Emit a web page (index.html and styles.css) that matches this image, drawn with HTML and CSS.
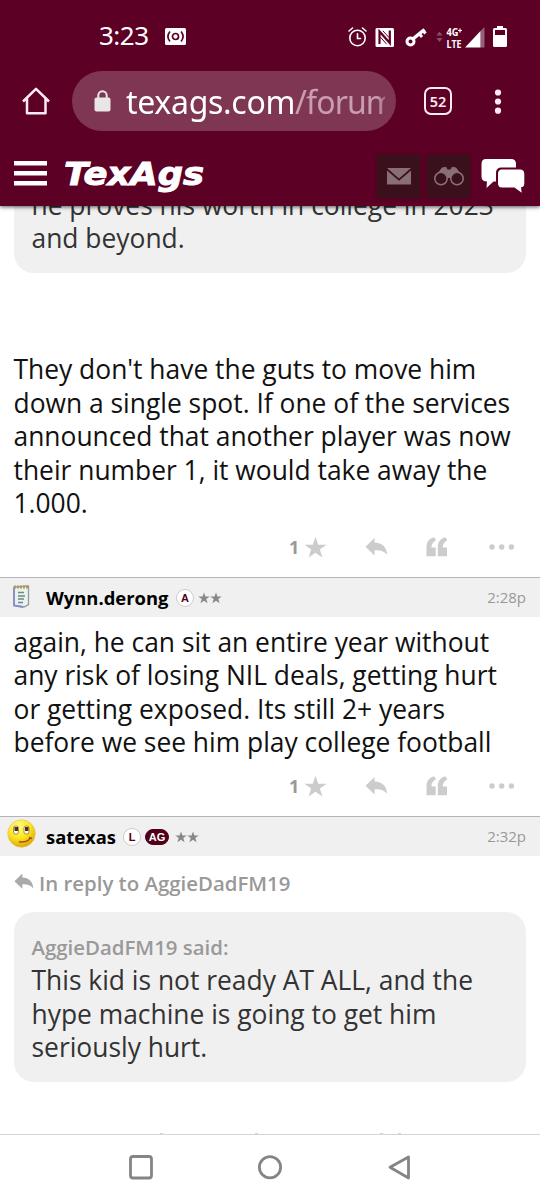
FILE: index.html
```html
<!DOCTYPE html>
<html lang="en">
<head>
<meta charset="utf-8">
<title>TexAgs Forums</title>
<link rel="stylesheet" href="styles.css">
</head>
<body>
<svg class="defs" width="0" height="0">
  <symbol id="star" viewBox="0 0 22 22"><path d="M11 0.8 13.6 8.3H21.5L15.2 12.9 17.6 20.6 11 16 4.4 20.6 6.8 12.9 0.5 8.3H8.4Z"/></symbol>
  <symbol id="reply" viewBox="0 0 24 20"><path d="M10 .5V5.3C18 5.5 22.5 10 23.3 18.3 20.5 14.5 16.5 13.2 10 13.3V18.8L.5 9.7Z"/></symbol>
  <symbol id="quote" viewBox="0 0 22 20"><path d="M.5 19.2V10C.5 4 4 .8 8.4.4L10 3.2C7.2 4.7 5.4 7 5.4 10.4H9.7V19.2ZM11.8 19.2V10C11.8 4 15.3 .8 19.7 .4L21.3 3.2C18.5 4.7 16.7 7 16.7 10.4H21V19.2Z"/></symbol>
  <symbol id="dots" viewBox="0 0 26 6"><circle cx="3" cy="3" r="2.7"/><circle cx="12.7" cy="3" r="2.7"/><circle cx="22.4" cy="3" r="2.7"/></symbol>
</svg>
<div class="phone">
  <header class="top">
    <div class="status">
      <span class="clock">3:23</span>
      <svg class="cast" width="21" height="17" viewBox="0 0 21 17"><rect width="21" height="17" rx="1.5" fill="#fff"/><g fill="none" stroke="#5c0025" stroke-width="1.7"><circle cx="10.500" cy="8.500" r="3"/><path d="M5 3.500Q.800 8.500 5 13.500M16 3.500Q20.200 8.500 16 13.500"/></g></svg>
      <svg class="sysicons" width="162" height="27" viewBox="0 0 162 27">
        <g fill="none" stroke="#fff" stroke-width="1.600" stroke-linecap="round"><circle cx="9.500" cy="13" r="7.700"/><path d="M9.500 8.800V13.500H12.500M1 6 4.500 3M18 6 14.500 3"/></g>
        <rect x="27.500" y="3" width="18.500" height="19" rx="1.500" fill="#fff"/>
        <path d="M31.500 19V6.500L41.800 18V5.500" fill="none" stroke="#5c0025" stroke-width="2.200"/><path d="M34.800 5.800 41 12.500M32.300 12 38.600 19.200" stroke="#5c0025" stroke-width="1"/>
        <g fill="none" stroke="#fff"><circle cx="62.500" cy="16.500" r="3.500" stroke-width="3"/><path d="M65.500 13.500 76.500 4.500" stroke-width="3.500"/><path d="M71 8.500 74 12M75 5.500 77.500 8.500" stroke-width="3"/></g>
        <path d="M88.500 10.500 91.500 6.500 94.500 10.500ZM88.500 13 91.500 17 94.500 13Z" fill="#8b5067"/>
        <text class="net" x="98.500" y="10.500" textLength="12" lengthAdjust="spacingAndGlyphs">4G</text><path d="M112 3.500V7.500M110 5.500H114" stroke="#fff" stroke-width="1.200"/>
        <text class="net" x="98.500" y="22.500" textLength="15" lengthAdjust="spacingAndGlyphs">LTE</text>
        <path d="M132.500 22.500V6L136.500 2V22.500Z" fill="#93617a"/><path d="M117 22.500 132.500 6V22.500Z" fill="#fff"/>
        <path d="M149 1H155V3H157.500Q159 3 159 4.500V20.500Q159 22 157.500 22H146.500Q145 22 145 20.500V4.500Q145 3 146.500 3H149Z" fill="#fff"/><rect x="147" y="5" width="10" height="5" fill="#5c0025"/>
      </svg>
    </div>
    <div class="browser">
      <svg class="home" width="28" height="28" viewBox="0 0 28 28" fill="none" stroke="#ffe9f2" stroke-width="2.500" stroke-linejoin="round"><path d="M1 14.500 14 1.800 27 14.500M5 11.500V26.300H23.500V11.500"/></svg>
      <div class="url">
        <svg width="17" height="22" viewBox="0 0 17 22"><rect x=".5" y="7.500" width="16" height="14" rx="2" fill="#e8e6e7"/><path d="M4.300 8V5.500a4.200 4.200 0 0 1 8.400 0V8" fill="none" stroke="#e8e6e7" stroke-width="2"/></svg>
        <span class="addr">texags.com<span class="path">/forum</span></span>
      </div>
      <div class="tabs">52</div>
      <svg class="menu" width="8" height="26" viewBox="0 0 8 26" fill="#ffe9f2"><circle cx="4" cy="3.500" r="3.100"/><circle cx="4" cy="12.500" r="3.100"/><circle cx="4" cy="21.700" r="3.100"/></svg>
    </div>
    <div class="site">
      <svg class="burger" width="33" height="25" viewBox="0 0 33 25" fill="#fff"><path d="M0 0H33V4.500H0ZM0 10H33V14.500H0ZM0 20H33V24.500H0Z"/></svg>
      <svg class="logo" width="144" height="42" viewBox="0 0 144 42"><text x="-1" y="30" textLength="140" lengthAdjust="spacingAndGlyphs">TexAgs</text></svg>
      <div class="tile mail"><svg width="24" height="17" viewBox="0 0 24 17" fill="#8a6e77"><path d="M0 0H24L12 10.500ZM0 2.500 12 12.800 24 2.500V16.500H0Z"/></svg></div>
      <div class="tile"><svg width="30" height="20" viewBox="0 0 30 20"><path d="M3 8 8 1.500 12 .8 13.500 3.500H16.500L18 .8 22 1.500 27 8 20 12H10Z" fill="#8a6e77"/><g fill="#39101c" stroke="#8a6e77" stroke-width="1.600"><circle cx="7" cy="12.500" r="6.200"/><circle cx="23" cy="12.500" r="6.200"/></g></svg></div>
      <svg class="chat" width="44" height="36" viewBox="0 0 44 36" fill="#fff"><path d="M5 1H30Q35 1 35 6V9.500H20.500Q15 9.500 15 15V23.500H12.500L5.500 30 6 23.500Q.500 23.500.500 18.500V6Q.500 1 5 1Z"/><path d="M21 11.500H39Q43.300 11.500 43.300 16V25Q43.300 29.300 40 29.300L40.700 34.800 33.500 29.500H21Q17 29.500 17 25V16Q17 11.500 21 11.500Z"/></svg>
    </div>
  </header>
  <main class="feed">
    <blockquote class="quote clipped">he proves his worth in college in 2023<br>and beyond.</blockquote>
    <p class="body first">They don't have the guts to move him<br>down a single spot. If one of the services<br>announced that another player was now<br>their number 1, it would take away the<br>1.000.</p>
    <div class="actions"><b>1</b><svg class="a-star"><use href="#star"/></svg><svg class="a-reply"><use href="#reply"/></svg><svg class="a-quote"><use href="#quote"/></svg><svg class="a-dots"><use href="#dots"/></svg></div>
    <div class="poster">
      <svg class="avatar note" width="19" height="24" viewBox="0 0 19 24"><path d="M2 3 16.500 2V20.500L12 23 2 21.500Z" fill="#e9f3ee" stroke="#929a9d" stroke-width="1.300"/><path d="M2 3V21.500L11 23" fill="none" stroke="#8a8ad0" stroke-width="1.800"/><path d="M2 3H17" stroke="#b69b50" stroke-width="3" stroke-dasharray="2 1"/><path d="M6 8.500H12M6 12H13M6 15H12M6 18.500H11" stroke="#71858b" stroke-width="1.300"/></svg>
      <span class="name wynn">Wynn.derong</span><span class="badge">A</span>
      <svg class="rank"><use href="#star"/></svg><svg class="rank"><use href="#star"/></svg><time>2:28p</time>
    </div>
    <p class="body second">again, he can sit an entire year without<br>any risk of losing NIL deals, getting hurt<br>or getting exposed. Its still 2+ years<br>before we see him play college football</p>
    <div class="actions"><b>1</b><svg class="a-star"><use href="#star"/></svg><svg class="a-reply"><use href="#reply"/></svg><svg class="a-quote"><use href="#quote"/></svg><svg class="a-dots"><use href="#dots"/></svg></div>
    <div class="poster">
      <svg class="avatar smile" width="29" height="29" viewBox="0 0 29 29"><defs><radialGradient id="face" cx=".4" cy=".25" r=".75"><stop offset="0" stop-color="#fffb88"/><stop offset=".55" stop-color="#fbe620"/><stop offset="1" stop-color="#dda80c"/></radialGradient></defs><circle cx="14.500" cy="14.500" r="13.800" fill="url(#face)" stroke="#e4c55a" stroke-width=".6"/><g fill="#fff" stroke="#8b6415" stroke-width=".7"><rect x="6.500" y="7" width="5" height="8" rx="2"/><rect x="17" y="7" width="5" height="8" rx="2"/></g><path d="M7.500 8H11V12H7.500ZM18 8H21.500V12H18Z" fill="#4e3010"/><path d="M12 22.800Q21 24 23.500 18.500M22 18.500 25 19.500" fill="none" stroke="#a94d07" stroke-width="1.400"/></svg>
      <span class="name sat">satexas</span><span class="badge">L</span><span class="badge ag">AG</span>
      <svg class="rank"><use href="#star"/></svg><svg class="rank"><use href="#star"/></svg><time>2:32p</time>
    </div>
    <div class="inreply"><svg><use href="#reply"/></svg><span>In reply to AggieDadFM19</span></div>
    <blockquote class="quote"><cite>AggieDadFM19 said:</cite>This kid is not ready AT ALL, and the<br>hype machine is going to get him<br>seriously hurt.</blockquote>
    <svg class="peek" width="540" height="2" fill="#a8a8a8"><path d="M160 .5h3v1.500h-3ZM255 .5h3v1.500h-3ZM380 .5h3v1.500h-3ZM398 .5h3v1.500h-3Z"/></svg>
  </main>
  <nav class="system">
    <svg width="540" height="65" viewBox="0 0 540 65" fill="none" stroke="#858585" stroke-width="2.800" stroke-linejoin="round"><rect x="130.500" y="21.500" width="21" height="21.500" rx="2.500"/><circle cx="270" cy="32.300" r="10.600"/><path d="M390 32.300 408.500 22V43Z"/></svg>
  </nav>
</div>
</body>
</html>
```

FILE: styles.css
```css
* { box-sizing: border-box; }
body { margin: 0; background: #fff; font-family: "Open Sans", "Noto Sans", sans-serif; }
svg { display: block; flex: none; }
.defs { position: absolute; }
.phone { width: 540px; height: 1200px; display: flex; flex-direction: column; overflow: hidden; }

.top { flex: none; height: 206px; background: #5c0025; box-shadow: 0 1px 4px rgba(0,0,0,.65); z-index: 1; color: #fff; }
.status { height: 71px; display: flex; align-items: flex-start; padding: 23px 29px 0 99px; }
.clock { font: 26px/24px "Noto Sans", sans-serif; width: 66px; letter-spacing: -.5px; }
.cast { margin-top: 5px; }
.sysicons { margin-left: 162px; margin-top: 2px; }
.net { font: bold 10.500px "Open Sans", sans-serif; fill: #fff; }
.browser { height: 60px; display: flex; align-items: center; padding-left: 22px; }
.url { margin-left: 22px; width: 324px; height: 60px; border-radius: 30px; background: #7f3653; display: flex; align-items: center; padding: 0 11px 0 22px; gap: 15px; }
.addr { flex: 1; min-width: 0; overflow: hidden; white-space: nowrap; font: 32px/60px "Noto Sans", sans-serif; letter-spacing: -.3px; padding-top: 2px; mask-image: linear-gradient(to right, #000 calc(100% - 8px), rgba(0,0,0,.5)); }
.path { color: #c99db0; letter-spacing: -.9px; }
.tabs { margin-left: 28px; width: 28px; height: 28px; border: 2.500px solid #ffe9f2; border-radius: 7px; color: #ffe9f2; font: 600 14.500px/24px "Noto Sans", sans-serif; text-align: center; }
.menu { margin-left: 42px; margin-top: 1px; }
.site { height: 75px; padding: 9px 0 0 14px; display: flex; align-items: center; }
.burger { margin-top: 1px; }
.logo { margin-left: 18px; margin-top: 6px; }
.logo text { font: italic bold 32.500px "DejaVu Sans", sans-serif; fill: #fff; stroke: #fff; stroke-width: 1px; }
.tile { width: 43px; height: 43px; margin-right: 7px; background: #39101c; box-shadow: 0 0 3px #39101c; display: flex; align-items: center; justify-content: center; margin-top: 6px; }
.mail { margin-left: 168px; }
.chat { margin-left: 4px; margin-top: 5px; }

.feed { height: 928px; overflow: hidden; flex: none; }
.quote { margin: 0 14px; padding: 19px 17.500px 17px; background: #f0f0f0; border-radius: 20px; color: #333; font-size: 26.400px; line-height: 33.500px; white-space: nowrap; }
.clipped { margin-top: -36.500px; }
.quote cite { display: block; font-style: normal; font-weight: 600; font-size: 20.400px; line-height: 33.500px; color: #999; }
.body { margin: 0 13.500px; color: #111; font-size: 26.400px; line-height: 33.500px; white-space: nowrap; }
.first { padding-top: 80.600px; }
.second { padding-top: 9px; }
.actions { height: 56.500px; padding: 0 25px 3px 289px; display: flex; align-items: center; fill: #ccc; }
.actions b { width: 15px; color: #999; font-size: 18px; }
.a-star { width: 23px; height: 23px; }
.a-reply { width: 23px; height: 20px; margin-left: 38px; }
.a-quote { width: 22px; height: 20px; margin-left: 38px; }
.a-dots { width: 26px; height: 6px; margin-left: 41px; }
.poster { height: 39.500px; border-top: 1.500px solid #b5b5b5; background: #f0f0f0; display: flex; align-items: center; padding: 2px 14px 0 0; }
.note { margin: -5px 15px 0 12px; }
.smile { margin: -7px 10px 0 7px; }
.name { font-size: 18.400px; font-weight: 700; color: #000; white-space: nowrap; margin-top: -2.500px; }
.wynn { width: 130px; }
.sat { width: 77px; }
.badge { width: 18px; height: 18px; border-radius: 9px; border: 1px solid #ccc; background: #fff; color: #500014; font: bold 11px/16px "Liberation Sans", sans-serif; text-align: center; margin-right: 4px; margin-top: -1px; }
.ag { width: 24px; height: 16px; background: #500019; color: #fff; border-color: #500019; line-height: 14px; margin-right: 6px; }
.rank { width: 12px; height: 12px; fill: #888; }
time { margin-left: auto; font-size: 15px; color: #999; margin-top: -2px; }
.inreply { height: 56px; padding: 0 0 2px 14px; display: flex; align-items: center; gap: 5px; color: #999; font-size: 20.400px; font-weight: 600; }
.inreply svg { width: 20px; height: 17px; margin-top: -3px; fill: #aaa; }
.peek { margin-top: 51px; }
.system { height: 66px; border-top: 1px solid #d5d5d5; flex: none; background: #fff; }
```
